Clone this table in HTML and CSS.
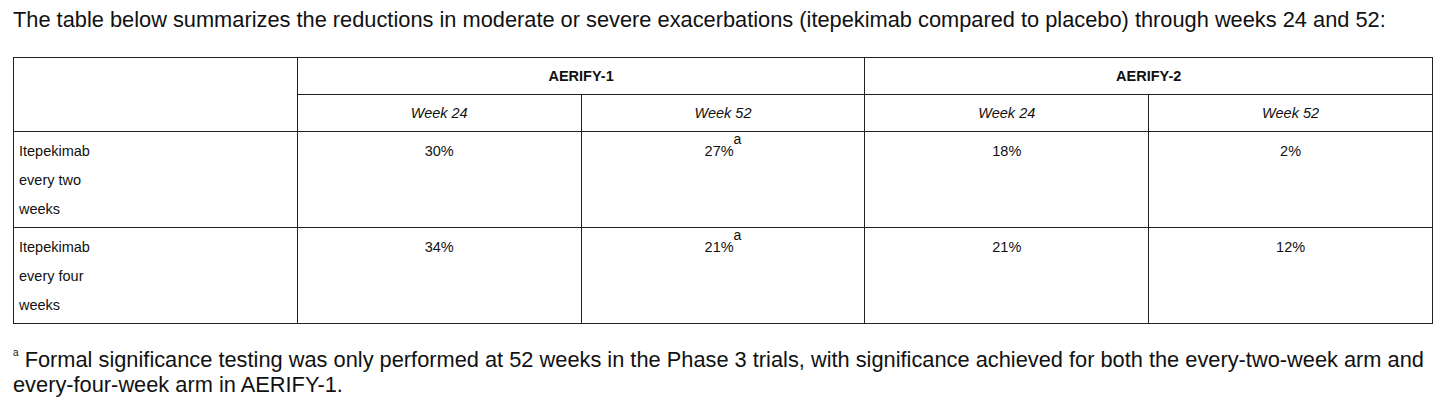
FILE: index.html
```html
<!DOCTYPE html>
<html lang="en">
<head>
<meta charset="utf-8">
<title>Itepekimab exacerbation reductions</title>
<link rel="stylesheet" href="styles.css">
</head>
<body>
<main class="page">
  <p class="intro">The table below summarizes the reductions in moderate or severe exacerbations (itepekimab compared to placebo) through weeks 24 and 52:</p>
  <table class="results">
    <colgroup>
      <col><col><col><col><col>
    </colgroup>
    <thead>
      <tr class="trial-row">
        <th class="blank" rowspan="2"></th>
        <th class="trial" colspan="2">AERIFY-1</th>
        <th class="trial" colspan="2">AERIFY-2</th>
      </tr>
      <tr class="week-row">
        <th class="week">Week 24</th>
        <th class="week">Week 52</th>
        <th class="week">Week 24</th>
        <th class="week">Week 52</th>
      </tr>
    </thead>
    <tbody>
      <tr class="data-row">
        <td class="label">Itepekimab<br>every two<br>weeks</td>
        <td class="value">30%</td>
        <td class="value">27%<span class="mark">a</span></td>
        <td class="value">18%</td>
        <td class="value">2%</td>
      </tr>
      <tr class="data-row">
        <td class="label">Itepekimab<br>every four<br>weeks</td>
        <td class="value">34%</td>
        <td class="value">21%<span class="mark">a</span></td>
        <td class="value">21%</td>
        <td class="value">12%</td>
      </tr>
    </tbody>
  </table>
  <p class="footnote"><span class="fn-mark">a</span> <span class="fn-text">Formal significance testing was only performed at 52 weeks in the Phase 3 trials, with significance achieved for both the every-two-week arm and every-four-week arm in AERIFY-1.</span></p>
</main>
</body>
</html>
```

FILE: styles.css
```css
html, body {
  margin: 0;
  padding: 0;
  background: #ffffff;
}

body {
  font-family: "Liberation Sans", Arial, Helvetica, sans-serif;
  color: #111111;
}

.page {
  padding: 7px 23px 0 13px;
}

.intro {
  margin: 0;
  font-size: 21.8px;
  line-height: 26px;
}

.results {
  margin-top: 24px;
  width: 1420px;
  border-collapse: collapse;
  table-layout: fixed;
  font-size: 14.5px;
}

.results th,
.results td {
  border: 1px solid #222222;
  padding: 0 5px;
}

.trial-row th,
.week-row th {
  height: 36px;
  vertical-align: middle;
  text-align: center;
}

.trial {
  font-weight: bold;
}

.week {
  font-weight: normal;
  font-style: italic;
}

.data-row td {
  vertical-align: top;
  line-height: 29px;
  padding-top: 5px;
  padding-bottom: 3px;
}

.label {
  text-align: left;
}

.value {
  text-align: center;
}

.mark {
  font-size: 14px;
  vertical-align: 12px;
  line-height: 0;
}

.footnote {
  margin: 23px 0 0;
  font-size: 21.8px;
  line-height: 25px;
}

.fn-mark {
  display: inline-block;
  font-size: 10px;
  line-height: 10px;
  vertical-align: 11px;
}
```
